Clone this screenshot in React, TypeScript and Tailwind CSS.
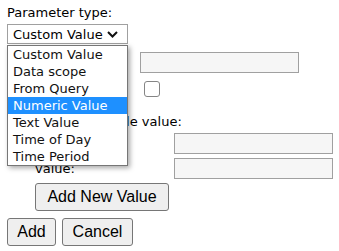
import React from "react";

const items = [
  "Custom Value",
  "Data scope",
  "From Query",
  "Numeric Value",
  "Text Value",
  "Time of Day",
  "Time Period",
];

export default function App() {
  return (
    <div className="relative w-[339px] h-[251px] bg-white text-black font-['DejaVu_Sans',Verdana,sans-serif] text-[13px] leading-[15px] pl-[7px] pt-[5px]">
      <div>Parameter type:</div>
      <div className="mt-[4px] w-[121px] h-[20px] border border-[#a0a0a0] bg-white flex items-center pl-[5px] pr-[9px] justify-between">
        <span>Custom Value</span>
        <svg width="11" height="7" viewBox="0 0 11 7" className="mt-[1px]">
          <polyline points="1,1 5.5,5.5 10,1" fill="none" stroke="#111" strokeWidth="2" />
        </svg>
      </div>

      <div className="flex items-center mt-[8px] h-[21px]">
        <span className="w-[133px]" />
        <div className="w-[159px] h-[21px] border border-[#a0a0a0] bg-[#f6f6f6]" />
      </div>
      <div className="flex items-center mt-[8px] h-[16px]">
        <span className="w-[137px]" />
        <div className="w-[16px] h-[16px] border border-[#858585] rounded-[3px] bg-white" />
      </div>
      <div className="mt-[17px] pl-[3px]">Enter each possible value:</div>
      <div className="flex items-center mt-[4px] h-[21px] pl-[28px]">
        <span className="w-[139px]" />
        <div className="w-[159px] h-[21px] border border-[#a0a0a0] bg-[#f6f6f6]" />
      </div>
      <div className="flex items-center mt-[4px] h-[21px] pl-[28px]">
        <span className="w-[139px]">value:</span>
        <div className="w-[159px] h-[21px] border border-[#a0a0a0] bg-[#f6f6f6]" />
      </div>
      <div className="mt-[4px] pl-[28px]">
        <button className="w-[134px] h-[28px] border border-[#767676] rounded-[3px] bg-[#efefef] font-['Liberation_Sans',Arial,sans-serif] text-[16px] leading-[18px] text-black">
          Add New Value
        </button>
      </div>
      <div className="mt-[7px] flex gap-[6px]">
        <button className="w-[49px] h-[28px] border border-[#767676] rounded-[3px] bg-[#efefef] font-['Liberation_Sans',Arial,sans-serif] text-[16px] leading-[18px] text-black">
          Add
        </button>
        <button className="w-[71px] h-[28px] border border-[#767676] rounded-[3px] bg-[#efefef] font-['Liberation_Sans',Arial,sans-serif] text-[16px] leading-[18px] text-black">
          Cancel
        </button>
      </div>

      <div className="absolute left-[7px] top-[45px] w-[121px] border border-[#767676] bg-white shadow-[2px_2px_5px_rgba(0,0,0,0.35)]">
        {items.map((it) => (
          <div
            key={it}
            className={
              it === "Numeric Value"
                ? "h-[17px] leading-[17px] pl-[5px] bg-[#1e90ff] text-white"
                : "h-[17px] leading-[17px] pl-[5px] text-[#111]"
            }
          >
            {it}
          </div>
        ))}
      </div>
    </div>
  );
}
